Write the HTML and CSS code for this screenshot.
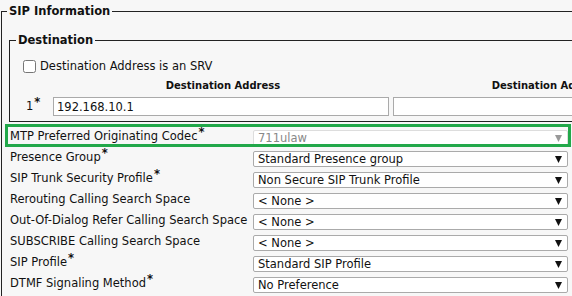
FILE: index.html
```html
<!DOCTYPE html>
<html lang="en">
<head>
  <meta charset="UTF-8">
  <title>SIP Trunk Configuration</title>
  <link rel="stylesheet" href="styles.css">
</head>
<body>

  <fieldset class="section">
    <legend>SIP Information</legend>

    <fieldset class="group">
      <legend>Destination</legend>

      <label class="srv"><input type="checkbox"> Destination Address is an SRV</label>

      <div class="dest-table">
        <div class="dest-head"></div>
        <div class="dest-head">Destination Address</div>
        <div class="dest-head">Destination Address IPv6</div>

        <div class="dest-index">1<span class="req">*</span></div>
        <div><input type="text" class="dest-input" value="192.168.10.1"></div>
        <div><input type="text" class="dest-input wide" value=""></div>
      </div>
    </fieldset>

    <div class="fields">
      <div class="field highlight">
        <div class="field-label">MTP Preferred Originating Codec<span class="req">*</span></div>
        <div class="select disabled"><span>711ulaw</span><svg class="arrow" width="7" height="7" viewBox="0 0 7 7"><path d="M0 0h7L3.5 7z"/></svg></div>
      </div>
      <div class="field">
        <div class="field-label">Presence Group<span class="req">*</span></div>
        <div class="select"><span>Standard Presence group</span><svg class="arrow" width="7" height="7" viewBox="0 0 7 7"><path d="M0 0h7L3.5 7z"/></svg></div>
      </div>
      <div class="field">
        <div class="field-label">SIP Trunk Security Profile<span class="req">*</span></div>
        <div class="select"><span>Non Secure SIP Trunk Profile</span><svg class="arrow" width="7" height="7" viewBox="0 0 7 7"><path d="M0 0h7L3.5 7z"/></svg></div>
      </div>
      <div class="field">
        <div class="field-label">Rerouting Calling Search Space</div>
        <div class="select"><span>&lt; None &gt;</span><svg class="arrow" width="7" height="7" viewBox="0 0 7 7"><path d="M0 0h7L3.5 7z"/></svg></div>
      </div>
      <div class="field">
        <div class="field-label">Out-Of-Dialog Refer Calling Search Space</div>
        <div class="select"><span>&lt; None &gt;</span><svg class="arrow" width="7" height="7" viewBox="0 0 7 7"><path d="M0 0h7L3.5 7z"/></svg></div>
      </div>
      <div class="field">
        <div class="field-label">SUBSCRIBE Calling Search Space</div>
        <div class="select"><span>&lt; None &gt;</span><svg class="arrow" width="7" height="7" viewBox="0 0 7 7"><path d="M0 0h7L3.5 7z"/></svg></div>
      </div>
      <div class="field">
        <div class="field-label">SIP Profile<span class="req">*</span></div>
        <div class="select"><span>Standard SIP Profile</span><svg class="arrow" width="7" height="7" viewBox="0 0 7 7"><path d="M0 0h7L3.5 7z"/></svg></div>
      </div>
      <div class="field">
        <div class="field-label">DTMF Signaling Method<span class="req">*</span></div>
        <div class="select"><span>No Preference</span><svg class="arrow" width="7" height="7" viewBox="0 0 7 7"><path d="M0 0h7L3.5 7z"/></svg></div>
      </div>
    </div>
  </fieldset>

</body>
</html>
```

FILE: styles.css
```css
body {
  font-family: 'DejaVu Sans', Verdana, sans-serif;
  font-size: 11.5px;
  background: #f7f7f7;
  color: #111;
  margin: 0;
  overflow: hidden;
}

.section {
  width: 800px;
  margin: 4px 0 0 1px;
  padding: 0 0 0 5px;
  border: 1px solid #222;
}

.section > legend,
.group > legend {
  font-size: 11.5px;
  font-weight: bold;
  line-height: 14px;
  padding: 0 2px;
}

.group {
  margin: 15px 0 0 2px;
  padding: 0 0 4px 6px;
  border: 1px solid #222;
}

.srv {
  display: flex;
  align-items: center;
  height: 20px;
  margin-top: 9px;
  padding-left: 7px;
}

.srv input {
  width: 13px;
  height: 13px;
  margin: 0 4px 0 0;
}

.dest-table {
  display: grid;
  grid-template-columns: 37px 340px 340px;
}

.dest-head {
  height: 20px;
  line-height: 20px;
  text-align: center;
  font-weight: bold;
  font-size: 10px;
  white-space: nowrap;
  overflow: hidden;
}

.dest-index {
  padding-left: 10px;
  line-height: 21px;
}

.dest-input {
  box-sizing: border-box;
  width: 336px;
  height: 19px;
  margin: 1px 0 0 0;
  padding: 0 3px;
  border: 1px solid #aaa;
  background: #fff;
  font-family: inherit;
  font-size: 11.5px;
  color: #111;
}

.dest-input.wide {
  width: 336px;
}

.req {
  font-weight: bold;
  line-height: 0;
  vertical-align: 4px;
  margin-left: 1px;
}

.fields {
  margin: 6px 0 0 3px;
  width: 558px;
}

.field {
  position: relative;
  display: flex;
  height: 21px;
}

.field-label {
  width: 243px;
  line-height: 17px;
  white-space: nowrap;
}

.select {
  box-sizing: border-box;
  display: flex;
  align-items: center;
  justify-content: space-between;
  width: 315px;
  height: 16px;
  margin-top: 2px;
  padding: 0 5px 0 4px;
  background: #fff;
  border: 1px solid #aaa;
  border-radius: 2px;
}

.arrow {
  fill: #111;
}

.select.disabled {
  color: #888;
  border-color: #ddd;
}

.select.disabled .arrow {
  fill: #999;
}

/* green annotation box */
.highlight::after {
  content: '';
  position: absolute;
  left: -5px;
  right: -3px;
  top: -4px;
  height: 23px;
  border: 3px solid #22a84a;
  box-sizing: border-box;
}
```
